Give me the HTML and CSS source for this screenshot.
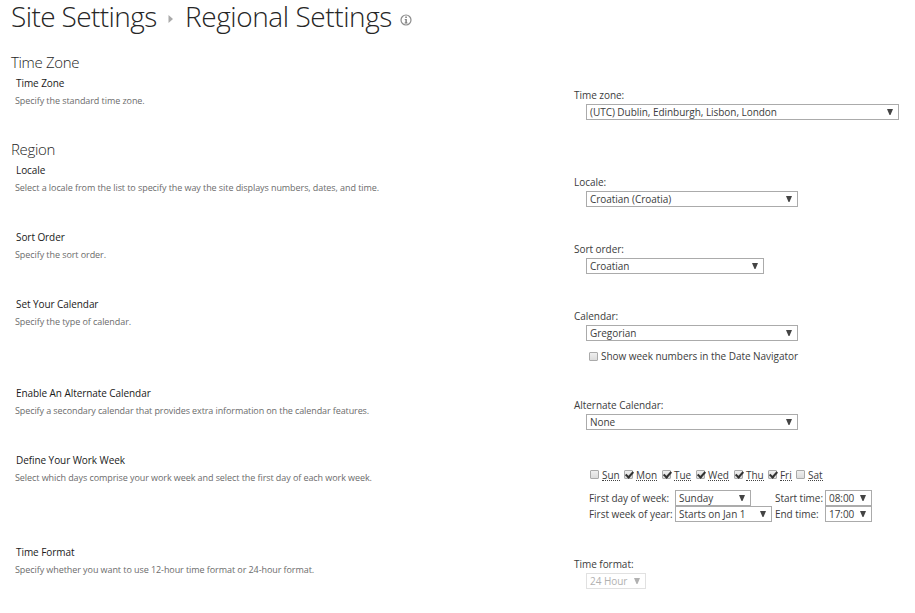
FILE: index.html
```
<!DOCTYPE html>
<html lang="en">
<head>
<meta charset="utf-8">
<title>Regional Settings</title>
<link rel="stylesheet" href="styles.css">
</head>
<body>
<header class="title">
  <span class="crumb">Site Settings</span>
  <svg class="sep" width="6" height="8" viewBox="0 0 6 8"><path d="M0.5 0 5 4 .5 8z" fill="#aaa"/></svg>
  <span class="page">Regional Settings</span>
  <svg class="info" width="12" height="12" viewBox="0 0 12 12"><circle cx="6" cy="6" r="5" fill="none" stroke="#8c8c8c" stroke-width="1.2"/><path d="M5.3 2.6h1.5v1.3H5.3zM4.7 4.9h2.1v3.7h.7v.8H4.6v-.8h.8V5.7h-.7z" fill="#777"/></svg>
</header>
<main>
  <h2 class="group">Time Zone</h2>
  <section class="row row-zone">
    <div class="about"><h3>Time Zone</h3><p>Specify the standard time zone.</p></div>
    <div class="field"><label>Time zone:</label><div class="select w-zone"><span>(UTC) Dublin, Edinburgh, Lisbon, London</span><i></i></div></div>
  </section>
  <h2 class="group">Region</h2>
  <section class="row">
    <div class="about"><h3>Locale</h3><p>Select a locale from the list to specify the way the site displays numbers, dates, and time.</p></div>
    <div class="field"><label>Locale:</label><div class="select w-wide"><span>Croatian (Croatia)</span><i></i></div></div>
  </section>
  <section class="row">
    <div class="about"><h3>Sort Order</h3><p>Specify the sort order.</p></div>
    <div class="field"><label>Sort order:</label><div class="select w-sort"><span>Croatian</span><i></i></div></div>
  </section>
  <section class="row row-cal">
    <div class="about"><h3>Set Your Calendar</h3><p>Specify the type of calendar.</p></div>
    <div class="field"><label>Calendar:</label><div class="select w-wide"><span>Gregorian</span><i></i></div>
      <div class="check"><b class="box"></b><span>Show week numbers in the Date Navigator</span></div></div>
  </section>
  <section class="row">
    <div class="about"><h3>Enable An Alternate Calendar</h3><p class="tight">Specify a secondary calendar that provides extra information on the calendar features.</p></div>
    <div class="field"><label>Alternate Calendar:</label><div class="select w-wide"><span>None</span><i></i></div></div>
  </section>
  <section class="row row-work">
    <div class="about"><h3>Define Your Work Week</h3><p>Select which days comprise your work week and select the first day of each work week.</p></div>
    <div class="field work">
      <div class="days">
        <span class="day sun"><b class="box"></b><abbr>Sun</abbr></span>
        <span class="day mon"><b class="box on"></b><abbr>Mon</abbr></span>
        <span class="day tue"><b class="box on"></b><abbr>Tue</abbr></span>
        <span class="day wed"><b class="box on"></b><abbr>Wed</abbr></span>
        <span class="day thu"><b class="box on"></b><abbr>Thu</abbr></span>
        <span class="day fri"><b class="box on"></b><abbr>Fri</abbr></span>
        <span class="day sat"><b class="box"></b><abbr>Sat</abbr></span>
      </div>
      <div class="times">
        <label>First day of week:</label><div class="select w-day"><span>Sunday</span><i></i></div><label>Start time:</label><div class="select"><span>08:00</span><i></i></div>
        <label>First week of year:</label><div class="select"><span>Starts on Jan 1</span><i></i></div><label>End time:</label><div class="select"><span>17:00</span><i></i></div>
      </div>
    </div>
  </section>
  <section class="row row-format">
    <div class="about"><h3>Time Format</h3><p>Specify whether you want to use 12-hour time format or 24-hour format.</p></div>
    <div class="field"><label>Time format:</label><div class="select w-format disabled"><span>24 Hour</span><i></i></div></div>
  </section>
</main>
</body>
</html>
```
FILE: styles.css
```
* { box-sizing: border-box; }
body { margin: 0; background: #fff; color: #3c3c3c; font: 10px/15px "Open Sans", sans-serif; letter-spacing: -0.04px; white-space: nowrap; }
.title { display: flex; align-items: center; height: 36px; padding-left: 11px; margin-bottom: 16px; color: #262626; font: 300 28px/32px "Open Sans", sans-serif; letter-spacing: -0.6px; }
.crumb { width: 157px; margin-top: -4px; }
.sep { margin-top: 2px; }
.page { margin: -4px 0 0 11px; width: 215px; letter-spacing: -0.42px; }
.info { margin-top: 3px; }
.group { margin: 0; height: 23px; padding-left: 11px; font-weight: 300; font-size: 15px; line-height: 20px; letter-spacing: -0.32px; color: #262626; }
.row { display: grid; grid-template-columns: 574px 1fr; height: 67px; }
.row-zone { height: 64px; }
.row-cal { height: 89px; }
.row-work { height: 92px; }
.row-format { height: 69px; }
.about h3 { margin: 0 0 0 16px; font-size: 10px; font-weight: 400; line-height: 17px; letter-spacing: -0.07px; color: #1a1a1a; }
.about p { margin: 0 0 0 15px; font-size: 9px; line-height: 17px; letter-spacing: -0.074px; color: #6c6c6c; }
.about .tight { letter-spacing: -0.1px; }
.field { padding-top: 13px; }
.field > label { display: block; height: 16px; }
.select { display: flex; justify-content: space-between; align-items: center; height: 16px; border: 1px solid #ababab; padding: 0 5px 0 3px; line-height: 14px; }
.field > .select { margin-left: 12px; }
.select i { width: 6px; height: 6px; background: #444; clip-path: polygon(0 0, 100% 0, 58% 100%, 42% 100%); }
.w-zone { width: 313px; }
.w-wide { width: 212px; }
.w-sort { width: 178px; }
.w-format { width: 60px; }
.disabled { color: #b1b1b1; border-color: #e1e1e1; }
.disabled i { background: #b1b1b1; }
.box { width: 9px; height: 9px; border: 1px solid #aaa; border-radius: 1px; background: linear-gradient(#efefef, #dcdcdc); flex: none; position: relative; }
.box.on::after { content: ""; position: absolute; left: 2px; top: -1px; width: 3px; height: 6px; border: solid #333; border-width: 0 2px 2px 0; transform: rotate(42deg); }
.check { display: flex; align-items: center; gap: 3px; margin: 7px 0 0 15px; height: 16px; }
.work { padding: 17px 0 0 16px; }
.days { display: flex; height: 13px; }
.day { display: flex; gap: 3px; }
.day .box { margin-top: 1px; }
.day abbr { height: 12px; line-height: 13px; border-bottom: 1px dotted #444; }
.sun, .tue, .thu { width: 34px; }
.mon, .wed { width: 38px; }
.fri { width: 28px; }
.times { display: grid; grid-template-columns: 86px 97px 53px 47px; grid-auto-rows: 16px; margin: 8px 0 0 -1px; line-height: 16px; }
.times > label:nth-child(4n+3) { padding-left: 3px; }
.w-day { width: 76px; }
```
